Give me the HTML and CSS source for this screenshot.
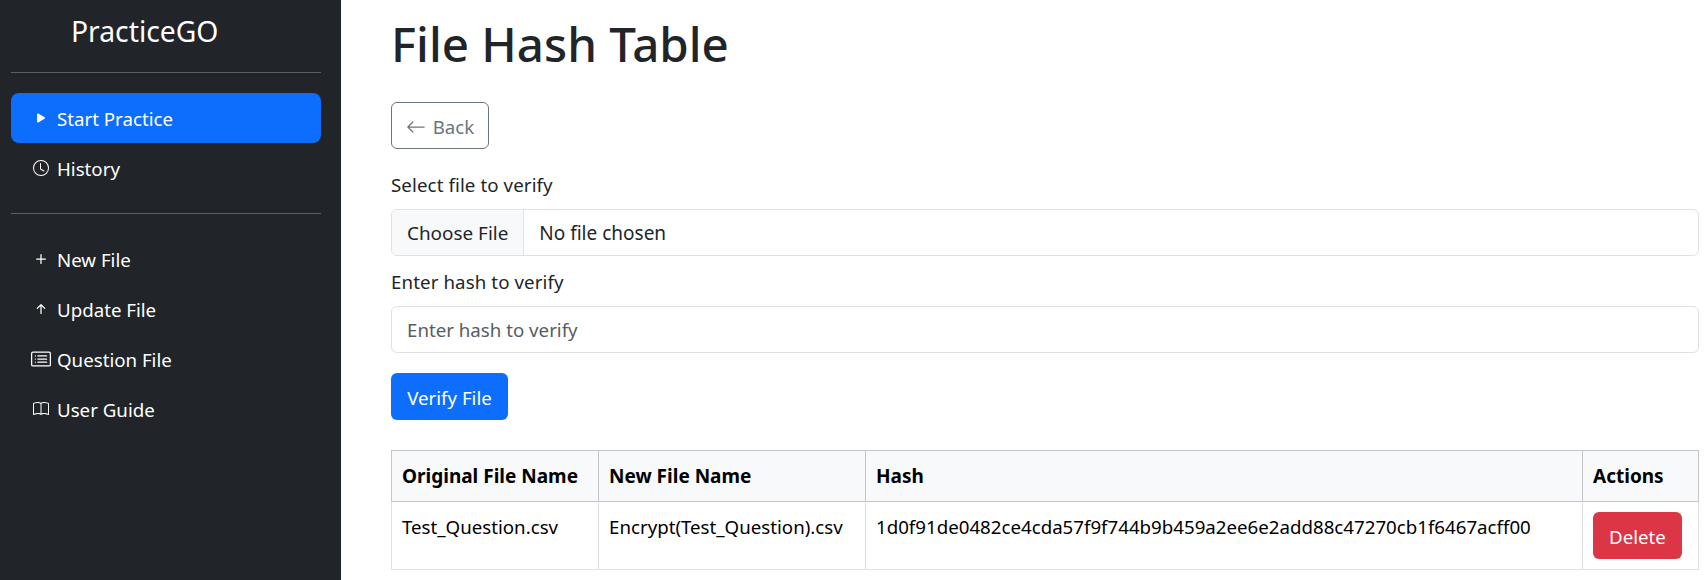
FILE: index.html
```html
<!DOCTYPE html>
<html lang="en">
<head>
    <meta charset="UTF-8">
    <meta name="viewport" content="width=device-width, initial-scale=1.0">
    <title>File Hash Table</title>
    <link rel="stylesheet" href="styles.css">
</head>
<body>
    <div class="app">
        <aside class="sidebar">
            <div class="brand">PracticeGO</div>
            <hr class="rule">
            <nav class="nav-group nav-top">
                <a class="nav-item active" href="#">
                    <span class="nav-icon"><svg class="icon-16" viewBox="0 0 16 16" fill="currentColor"><path d="m11.596 8.697-6.363 3.692c-.54.313-1.233-.066-1.233-.697V4.308c0-.63.692-1.01 1.233-.696l6.363 3.692a.802.802 0 0 1 0 1.393z"/></svg></span>
                    Start Practice
                </a>
                <a class="nav-item" href="#">
                    <span class="nav-icon"><svg class="icon-16" viewBox="0 0 16 16" fill="currentColor"><path d="M8 3.5a.5.5 0 0 0-1 0V9a.5.5 0 0 0 .252.434l3.5 2a.5.5 0 0 0 .496-.868L8 8.71V3.5z"/><path d="M8 16A8 8 0 1 0 8 0a8 8 0 0 0 0 16zm7-8A7 7 0 1 1 1 8a7 7 0 0 1 14 0z"/></svg></span>
                    History
                </a>
            </nav>
            <hr class="rule">
            <nav class="nav-group nav-bottom">
                <a class="nav-item" href="#">
                    <span class="nav-icon"><svg class="icon-20" viewBox="0 0 16 16" fill="currentColor"><path d="M8 4a.5.5 0 0 1 .5.5v3h3a.5.5 0 0 1 0 1h-3v3a.5.5 0 0 1-1 0v-3h-3a.5.5 0 0 1 0-1h3v-3A.5.5 0 0 1 8 4z"/></svg></span>
                    New File
                </a>
                <a class="nav-item" href="#">
                    <span class="nav-icon"><svg class="icon-20" viewBox="0 0 16 16" fill="currentColor"><path d="M8 12a.5.5 0 0 0 .5-.5V5.707l2.146 2.147a.5.5 0 0 0 .708-.708l-3-3a.5.5 0 0 0-.708 0l-3 3a.5.5 0 1 0 .708.708L7.5 5.707V11.5a.5.5 0 0 0 .5.5z"/></svg></span>
                    Update File
                </a>
                <a class="nav-item" href="#">
                    <span class="nav-icon"><svg class="icon-20" viewBox="0 0 16 16" fill="currentColor"><path d="M14.5 3a.5.5 0 0 1 .5.5v9a.5.5 0 0 1-.5.5h-13a.5.5 0 0 1-.5-.5v-9a.5.5 0 0 1 .5-.5h13zm-13-1A1.5 1.5 0 0 0 0 3.5v9A1.5 1.5 0 0 0 1.5 14h13a1.5 1.5 0 0 0 1.5-1.5v-9A1.5 1.5 0 0 0 14.5 2h-13z"/><path d="M5 8a.5.5 0 0 1 .5-.5h7a.5.5 0 0 1 0 1h-7A.5.5 0 0 1 5 8zm0-2.5a.5.5 0 0 1 .5-.5h7a.5.5 0 0 1 0 1h-7a.5.5 0 0 1-.5-.5zm0 5a.5.5 0 0 1 .5-.5h7a.5.5 0 0 1 0 1h-7a.5.5 0 0 1-.5-.5zm-1-5a.5.5 0 1 1-1 0 .5.5 0 0 1 1 0zM4 8a.5.5 0 1 1-1 0 .5.5 0 0 1 1 0zm0 2.5a.5.5 0 1 1-1 0 .5.5 0 0 1 1 0z"/></svg></span>
                    Question File
                </a>
                <a class="nav-item" href="#">
                    <span class="nav-icon"><svg class="icon-16" viewBox="0 0 16 16" fill="currentColor"><path d="M1 2.828c.885-.37 2.154-.769 3.388-.893 1.33-.134 2.458.063 3.112.752v9.746c-.935-.53-2.12-.603-3.213-.493-1.18.12-2.37.461-3.287.811V2.828zm7.5-.141c.654-.689 1.782-.886 3.112-.752 1.234.124 2.503.523 3.388.893v9.923c-.918-.35-2.107-.692-3.287-.81-1.094-.111-2.278-.039-3.213.492V2.687zM8 1.783C7.015.936 5.587.81 4.287.94c-1.514.153-3.042.672-3.994 1.105A.5.5 0 0 0 0 2.5v11a.5.5 0 0 0 .707.455c.882-.4 2.303-.881 3.68-1.02 1.409-.142 2.59.087 3.223.877a.5.5 0 0 0 .78 0c.633-.79 1.814-1.019 3.222-.877 1.378.139 2.8.62 3.681 1.02A.5.5 0 0 0 16 13.5v-11a.5.5 0 0 0-.293-.455c-.952-.433-2.48-.952-3.994-1.105C10.413.809 8.985.936 8 1.783z"/></svg></span>
                    User Guide
                </a>
            </nav>
        </aside>

        <main class="content">
            <h1>File Hash Table</h1>
            <a class="btn btn-back" href="#">
                <svg class="icon-back" viewBox="0 0 16 16" fill="currentColor"><path d="M15 8a.5.5 0 0 0-.5-.5H2.707l3.147-3.146a.5.5 0 1 0-.708-.708l-4 4a.5.5 0 0 0 0 .708l4 4a.5.5 0 0 0 .708-.708L2.707 8.5H14.5A.5.5 0 0 0 15 8z"/></svg>
                Back
            </a>
            <form class="verify-form" action="#" method="post">
                <div class="field-label">Select file to verify</div>
                <label class="file-input">
                    <span class="file-button">Choose File</span>
                    <span class="file-name">No file chosen</span>
                </label>
                <label class="field-label field-label-second" for="hash">Enter hash to verify</label>
                <input class="text-input" type="text" id="hash" name="hash" placeholder="Enter hash to verify">
                <button class="btn btn-primary" type="submit">Verify File</button>
            </form>
            <table class="hash-table">
                <thead>
                    <tr>
                        <th class="col-original">Original File Name</th>
                        <th class="col-new">New File Name</th>
                        <th class="col-hash">Hash</th>
                        <th class="col-actions">Actions</th>
                    </tr>
                </thead>
                <tbody>
                    <tr>
                        <td>Test_Question.csv</td>
                        <td>Encrypt(Test_Question).csv</td>
                        <td>1d0f91de0482ce4cda57f9f744b9b459a2ee6e2add88c47270cb1f6467acff00</td>
                        <td><button class="btn btn-danger" type="button">Delete</button></td>
                    </tr>
                </tbody>
            </table>
        </main>
    </div>
</body>
</html>
```

FILE: styles.css
```css
* {
    box-sizing: border-box;
}
body {
    margin: 0;
    font-family: "Noto Sans", "Open Sans", sans-serif;
    font-size: 18.7px;
    color: #212529;
    background-color: #fff;
}
.app {
    display: flex;
    height: 580px;
    overflow: hidden;
}

/* sidebar */
.sidebar {
    flex: 0 0 341px;
    padding: 0 20px 0 11px;
    background-color: #212529;
    color: #fff;
}
.brand {
    height: 72px;
    padding: 13px 0 0 60px;
    font-size: 28.3px;
    line-height: 36px;
}
.rule {
    height: 1px;
    margin: 0;
    border: 0;
    background-color: #5b5e62;
}
.nav-group {
    display: flex;
    flex-direction: column;
}
.nav-top {
    padding: 20px 0;
}
.nav-bottom {
    padding-top: 20px;
}
.nav-item {
    display: flex;
    align-items: center;
    gap: 6px;
    height: 50px;
    padding: 0 0 0 20px;
    border-radius: 8px;
    color: #fff;
    text-decoration: none;
}
.nav-item.active {
    background-color: #0d6efd;
}
.nav-icon {
    display: flex;
    justify-content: center;
    flex: 0 0 20px;
}
.icon-16 {
    width: 16px;
    height: 16px;
}
.icon-20 {
    width: 20px;
    height: 20px;
}

/* main column */
.content {
    flex: 1;
    min-width: 0;
    padding: 0 8px 0 50px;
}
h1 {
    height: 102px;
    margin: 0;
    padding-top: 6px;
    font-size: 47.5px;
    font-weight: 500;
    line-height: 76px;
}
.btn {
    display: inline-flex;
    align-items: center;
    justify-content: center;
    height: 47px;
    padding: 2px 0 0;
    border: 1px solid transparent;
    border-radius: 6px;
    font-family: inherit;
    font-size: 18.7px;
    text-decoration: none;
    cursor: pointer;
}
.btn-back {
    gap: 7px;
    width: 98px;
    border-color: #6c757d;
    color: #6c757d;
}
.icon-back {
    width: 20px;
    height: 20px;
}
.btn-primary {
    width: 117px;
    background-color: #0d6efd;
    color: #fff;
}
.btn-danger {
    width: 89px;
    background-color: #dc3545;
    color: #fff;
}
.verify-form {
    margin-top: 10px;
}
.field-label {
    display: block;
    height: 50px;
    padding-top: 11px;
    line-height: 30px;
    letter-spacing: 0.1px;
}
.file-input {
    display: flex;
    height: 47px;
    overflow: hidden;
    border: 1px solid #dee2e6;
    border-radius: 6px;
}
.file-button {
    display: flex;
    align-items: center;
    padding: 0 15px;
    border-right: 1px solid #dee2e6;
    background-color: #f8f9fa;
    font-size: 18.9px;
}
.file-name {
    display: flex;
    align-items: center;
    padding: 0 15px;
    font-size: 19px;
}
.text-input {
    display: block;
    width: 100%;
    height: 47px;
    margin-bottom: 20px;
    padding: 0 15px;
    border: 1px solid #dee2e6;
    border-radius: 6px;
    font-family: inherit;
    font-size: 18.7px;
    color: #212529;
}
.text-input::placeholder {
    color: #595c5f;
}

/* table */
.hash-table {
    width: 100%;
    margin-top: 30px;
    border-collapse: collapse;
    table-layout: fixed;
    color: #000;
}
.hash-table th,
.hash-table td {
    padding: 10px;
    vertical-align: top;
    text-align: left;
    line-height: 30px;
}
.hash-table th {
    height: 50px;
    border: 1px solid #c4c6c9;
    background-color: #f8f9fa;
    font-size: 19px;
    font-weight: 700;
}
.hash-table td {
    height: 68px;
    border: 1px solid #dee2e6;
    border-top: 0;
}
.col-original {
    width: 207px;
}
.col-new {
    width: 267px;
}
.col-actions {
    width: 116px;
}
```
